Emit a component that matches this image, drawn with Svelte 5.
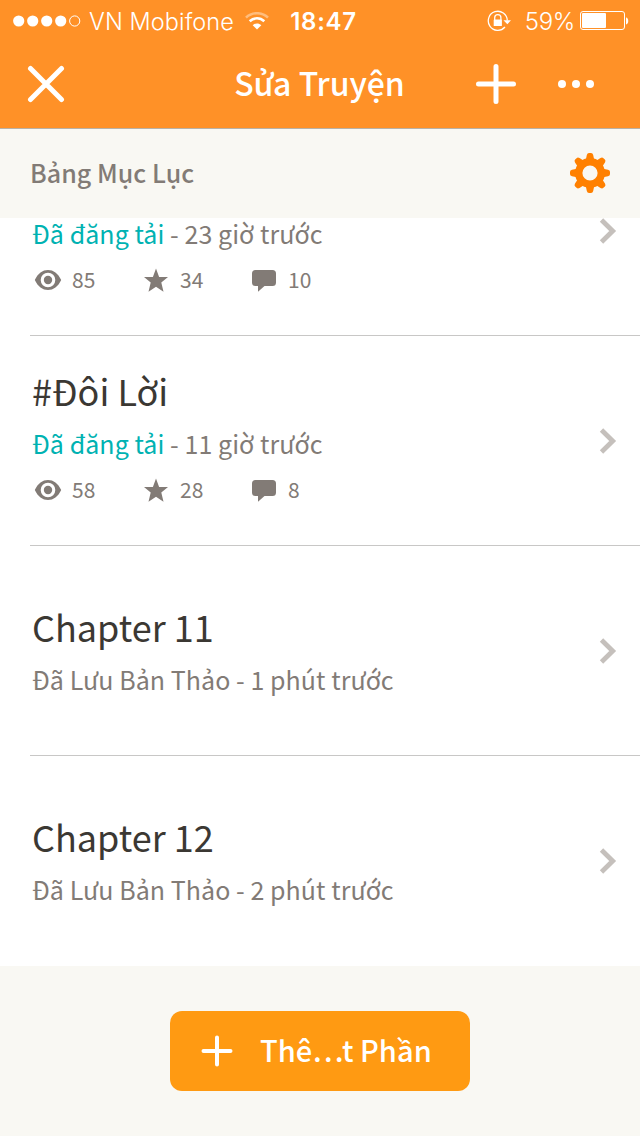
<script lang="ts">
  interface Chapter {
    title?: string;
    published?: boolean;
    time: string;
    views?: number;
    votes?: number;
    comments?: number;
  }

  export let battery = 59;

  const chapters: Chapter[] = [
    { published: true, time: '23 giờ trước', views: 85, votes: 34, comments: 10 },
    { title: '#Đôi Lời', published: true, time: '11 giờ trước', views: 58, votes: 28, comments: 8 },
    { title: 'Chapter 11', time: '1 phút trước' },
    { title: 'Chapter 12', time: '2 phút trước' },
  ];

  const teeth = [0, 45, 90, 135, 180, 225, 270, 315];
</script>

<div class="screen">
  <div class="top">
    <div class="status">
      <div class="carrier">
        <svg width="68" height="12" viewBox="0 0 68 12" fill="white">
          <circle cx="5.7" cy="6" r="5.6" />
          <circle cx="19.7" cy="6" r="5.6" />
          <circle cx="33.7" cy="6" r="5.6" />
          <circle cx="47.7" cy="6" r="5.6" />
          <circle cx="61.7" cy="6" r="5.1" fill="none" stroke="white" />
        </svg>
        <span class="network">VN Mobifone</span>
        <svg class="wifi" width="24" height="18" viewBox="0 0 24 18" fill="none" stroke="white" stroke-width="2.6">
          <path d="M1 5.6C7 -.2 17 -.2 23 5.6" opacity=".4" />
          <path d="M4.700 9.300C8.900 5.300 15.100 5.300 19.300 9.300" />
          <path d="M12 17.600L7.700 13.200C10.200 10.900 13.800 10.900 16.300 13.200Z" fill="white" stroke="none" />
        </svg>
      </div>
      <span class="clock">18:47</span>
      <div class="power">
        <svg width="24" height="22" viewBox="0 0 24 22" fill="none" stroke="white" stroke-width="1.300">
          <path d="M20.300 10.500A9.500 9.500 0 1 0 18 17" />
          <path d="M16.500 10.300h7.500l-3.700 4z" fill="white" stroke="none" />
          <path d="M7.700 10V7.700a3.100 3.100 0 0 1 6.200 0V10" />
          <rect x="6.700" y="9.500" width="8.200" height="6.500" rx=".6" fill="white" stroke="none" />
        </svg>
        <span class="percent">{battery}%</span>
        <div class="battery"><div class="charge" style="width: {battery}%"></div></div>
        <svg width="4" height="8" viewBox="0 0 4 8"><path d="M1 0.500C4 .8 4 7.200 1 7.500Z" fill="white" /></svg>
      </div>
    </div>

    <nav>
      <button aria-label="Đóng">
        <svg width="38" height="38" viewBox="0 0 38 38" stroke="white" stroke-width="5" stroke-linecap="round">
          <path d="M3.500 3.500L34.500 34.500M34.500 3.500L3.500 34.500" />
        </svg>
      </button>
      <h1>Sửa Truyện</h1>
      <div class="actions">
        <button aria-label="Thêm">
          <svg width="40" height="40" viewBox="0 0 40 40" stroke="white" stroke-width="5" stroke-linecap="round">
            <path d="M20 2.500V37.500M2.500 20H37.500" />
          </svg>
        </button>
        <button aria-label="Khác">
          <svg width="36" height="8" viewBox="0 0 36 8" fill="white">
            <circle cx="4" cy="4" r="4" />
            <circle cx="18" cy="4" r="4" />
            <circle cx="32" cy="4" r="4" />
          </svg>
        </button>
      </div>
    </nav>
  </div>

  <div class="section">
    <h2>Bảng Mục Lục</h2>
    <svg width="40" height="40" viewBox="-20 -20 40 40">
      <circle r="11.300" fill="none" stroke="#ff8000" stroke-width="7.400" />
      {#each teeth as angle}
        <path d="M-4.200 -13L-3.200 -18Q-2.700 -20 -1 -20H1Q2.700 -20 3.200 -18L4.200 -13Z" fill="#ff8000" transform="rotate({angle})" />
      {/each}
    </svg>
  </div>

  <ul>
    {#each chapters as chapter}
      <li>
        <div class="info" class:published={chapter.published}>
          {#if chapter.title}
            <h3>{chapter.title}</h3>
          {/if}
          {#if chapter.published}
            <p><span class="live">Đã đăng tải</span> - {chapter.time}</p>
            <div class="stats">
              <span class="stat">
                <svg width="28" height="24" viewBox="0 0 28 24" fill="#827b76">
                  <path fill-rule="evenodd" d="M.8 12C4 5.300 8.500 2 14 2S24 5.300 27.200 12C24 18.700 19.500 22 14 22S4 18.700 .8 12ZM14 4.700A7.300 7.300 0 1 0 14 19.300A7.300 7.300 0 1 0 14 4.700Z" />
                  <circle cx="14" cy="12" r="4.200" />
                </svg>
                <span>{chapter.views}</span>
              </span>
              <span class="stat">
                <svg width="28" height="24" viewBox="0 0 28 24" fill="#827b76">
                  <path d="M14 .5L17.100 9H26L19.300 14.400L21.500 23.800L14 18.800L6.500 23.800L8.700 14.400L2 9H10.900Z" />
                </svg>
                <span>{chapter.votes}</span>
              </span>
              <span class="stat">
                <svg width="28" height="24" viewBox="0 0 28 24" fill="#827b76">
                  <path d="M5.500 2H22.500Q26 2 26 5.500V14.500Q26 18 22.500 18H14.500L8 23.700V18H5.500Q2 18 2 14.500V5.500Q2 2 5.500 2Z" />
                </svg>
                <span>{chapter.comments}</span>
              </span>
            </div>
          {:else}
            <p>Đã Lưu Bản Thảo - {chapter.time}</p>
          {/if}
        </div>
        <svg width="18" height="26" viewBox="0 0 18 26" fill="none" stroke="#c5c0bc" stroke-width="4.800">
          <path d="M2.500 2L13.700 13L2.500 24" />
        </svg>
      </li>
    {/each}
  </ul>

  <footer>
    <button class="add">
      <svg width="32" height="32" viewBox="0 0 32 32" stroke="white" stroke-width="4" stroke-linecap="round">
        <path d="M16 2.500V29.500M2.500 16H29.500" />
      </svg>
      <span>Thê…t Phần</span>
    </button>
  </footer>
</div>

<style>
  :global(body) {
    margin: 0;
  }

  .screen {
    display: flex;
    flex-direction: column;
    width: 640px;
    height: 1136px;
    overflow: hidden;
    background: #f9f8f3;
    color: #827b76;
    font-family: "Noto Sans CJK SC", "Noto Sans", sans-serif;
  }

  h1, h2, h3, p, ul {
    margin: 0;
    padding: 0;
    font-weight: 400;
  }

  svg {
    display: block;
    flex: none;
  }

  button {
    display: block;
    border: none;
    padding: 0;
    background: none;
    font: inherit;
  }

  .top {
    height: 128px;
    flex: none;
    background: #ff9127;
    border-bottom: 1px solid #b9b1a5;
    color: white;
  }

  .status {
    display: grid;
    grid-template-columns: 1fr auto 1fr;
    align-items: center;
    height: 41px;
    padding: 0 11px 0 13px;
    font-family: Inter, sans-serif;
    font-size: 24px;
    line-height: 39px;
  }

  .carrier, .power {
    display: flex;
    align-items: center;
  }

  .network {
    margin-left: 8px;
    padding-top: 2px;
    font-size: 23.5px;
    font-weight: 300;
    letter-spacing: 0.1px;
  }

  .wifi {
    margin-left: 11px;
  }

  .clock {
    padding: 2px 0 0 5px;
    font-weight: 600;
    letter-spacing: 0.7px;
  }

  .power {
    justify-content: flex-end;
  }

  .percent {
    margin: 0 5px 0 14px;
    padding-top: 2px;
    font-weight: 300;
    letter-spacing: -0.3px;
  }

  .battery {
    box-sizing: border-box;
    width: 45px;
    height: 19px;
    padding: 1px;
    border: 1px solid white;
    border-radius: 3px;
  }

  .charge {
    height: 100%;
    border-radius: 1px;
    background: white;
  }

  nav {
    display: grid;
    grid-template-columns: 1fr auto 1fr;
    align-items: center;
    height: 86px;
    padding: 0 27px;
  }

  h1 {
    padding: 0 1px 4px 0;
    font-size: 32px;
    font-weight: 500;
    line-height: 82px;
  }

  .actions {
    display: flex;
    align-items: center;
    justify-content: flex-end;
    gap: 42px;
    margin-right: 19px;
  }

  .section {
    box-sizing: border-box;
    display: flex;
    flex: none;
    align-items: center;
    justify-content: space-between;
    height: 89px;
    padding: 0 30px 1px;
  }

  h2 {
    padding-bottom: 2px;
    font-size: 25px;
    font-weight: 500;
    letter-spacing: 0.05px;
  }

  ul {
    display: flex;
    flex: none;
    flex-direction: column;
    justify-content: flex-end;
    height: 748px;
    overflow: hidden;
    background: white;
    list-style: none;
  }

  li {
    box-sizing: border-box;
    display: flex;
    flex: none;
    align-items: center;
    justify-content: space-between;
    height: 210px;
    margin-left: 30px;
    padding: 0 23px 0 2px;
    border-bottom: 1px solid #c8c7c6;
  }

  li:last-child {
    border-bottom-color: white;
  }

  .info {
    box-sizing: border-box;
    display: flex;
    flex-direction: column;
    justify-content: flex-end;
    height: 100%;
    padding-bottom: 50px;
  }

  .published {
    padding-bottom: 36px;
  }

  h3 {
    color: #3b3833;
    font-size: 36px;
    line-height: 52px;
    margin-bottom: 1px;
  }

  p {
    margin: 11px 0;
    font-size: 25px;
    line-height: 30px;
    letter-spacing: 0.06px;
  }

  .live {
    color: #00b2b2;
  }

  .stats {
    display: flex;
    margin: 2px 0 0 2px;
  }

  .stat {
    display: flex;
    align-items: center;
    gap: 10px;
    width: 108px;
    font-size: 21px;
    line-height: 38px;
  }

  .stat span {
    height: 38px;
    line-height: 36px;
  }

  footer {
    display: flex;
    flex: 1;
    align-items: center;
    justify-content: center;
  }

  .add {
    display: flex;
    align-items: center;
    gap: 27px;
    width: 300px;
    height: 80px;
    padding: 0 31px;
    border-radius: 12px;
    background: #ff9a12;
    color: white;
    font-size: 29px;
    font-weight: 500;
    letter-spacing: 0.05px;
  }

  .add span {
    padding-bottom: 5px;
  }
</style>
